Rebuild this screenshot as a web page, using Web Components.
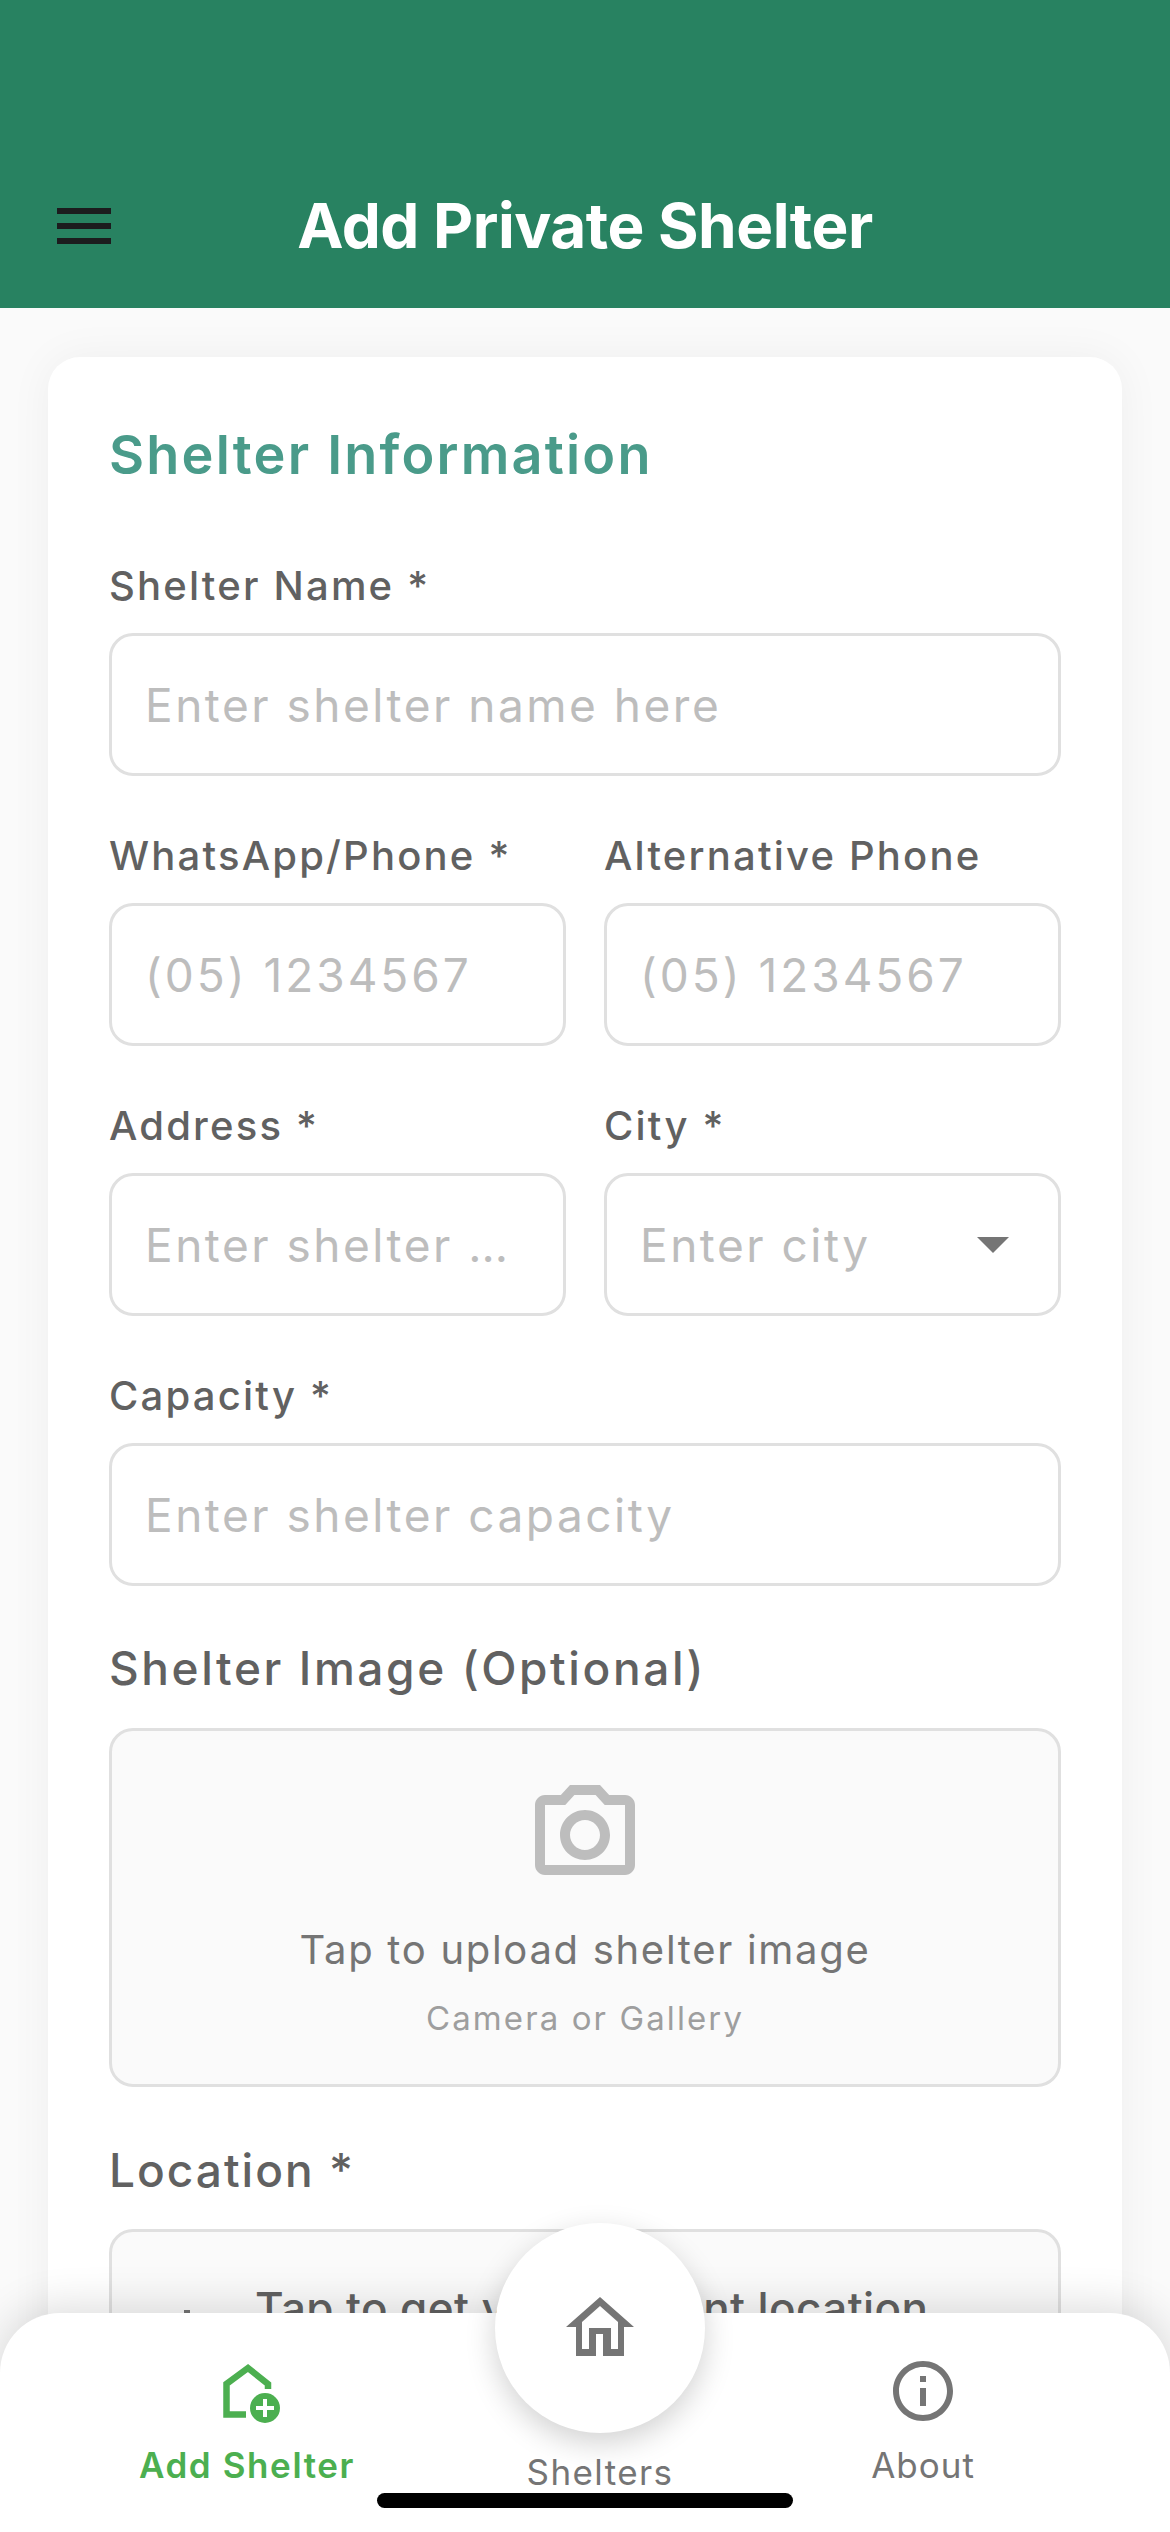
<!DOCTYPE html>
<html lang="en">
<head>
<meta charset="utf-8">
<title>Add Private Shelter</title>
<style>
    html, body { margin: 0; background: #fafafa; }
    body { font-family: Inter, "Liberation Sans", sans-serif; }
</style>
</head>
<body>
<shelter-app>
    <app-header slot="header" title="Add Private Shelter"></app-header>
    <form-card heading="Shelter Information">
        <text-field label="Shelter Name *" placeholder="Enter shelter name here"></text-field>
        <field-row>
            <text-field label="WhatsApp/Phone *" placeholder="(05) 1234567" numeric></text-field>
            <text-field label="Alternative Phone" placeholder="(05) 1234567" numeric></text-field>
        </field-row>
        <field-row>
            <text-field label="Address *" placeholder="Enter shelter …"></text-field>
            <text-field label="City *" placeholder="Enter city" dropdown></text-field>
        </field-row>
        <text-field label="Capacity *" placeholder="Enter shelter capacity"></text-field>
        <upload-box label="Shelter Image (Optional)" text="Tap to upload shelter image" hint="Camera or Gallery"></upload-box>
        <location-box label="Location *" text="Tap to get your current location"></location-box>
    </form-card>
    <bottom-nav slot="nav"></bottom-nav>
</shelter-app>

<script>
function makeTemplate(html) {
    const t = document.createElement('template');
    t.innerHTML = html;
    return t;
}

class Base extends HTMLElement {
    constructor(template) {
        super();
        this.attachShadow({mode: 'open'});
        this.shadowRoot.appendChild(template.content.cloneNode(true));
    }
    text(id, value) {
        this.shadowRoot.getElementById(id).textContent = value;
    }
}

const appTemplate = makeTemplate(`
    <style>
        :host {
            display: flex;
            flex-direction: column;
            position: relative;
            width: 1170px;
            height: 2532px;
            overflow: hidden;
            background: #fafafa;
        }
        main { padding: 49px 48px 0; }
    </style>
    <slot name="header"></slot>
    <main><slot></slot></main>
    <slot name="nav"></slot>
`);
customElements.define('shelter-app', class extends Base {
    constructor() { super(appTemplate); }
});

const headerTemplate = makeTemplate(`
    <style>
        :host {
            display: grid;
            grid-template-columns: 1fr auto 1fr;
            align-items: center;
            height: 100px;
            padding: 176px 0 32px;
            background: #288261;
            position: relative;
            z-index: 1;
        }
        svg { display: block; margin-left: 57px; }
        h1 {
            margin: 0;
            font: 700 62px/100px Inter, "Liberation Sans", sans-serif;
            letter-spacing: -0.5px;
            color: #fff;
        }
    </style>
    <svg width="54" height="36" viewBox="0 0 54 36" fill="#1c1c1e">
        <rect width="54" height="6"/><rect y="15" width="54" height="6"/><rect y="30" width="54" height="6"/>
    </svg>
    <h1 id="title"></h1>
`);
customElements.define('app-header', class extends Base {
    constructor() { super(headerTemplate); }
    connectedCallback() { this.text('title', this.getAttribute('title')); }
});

const cardTemplate = makeTemplate(`
    <style>
        :host {
            display: block;
            padding: 65px 61px 0;
            background: #fff;
            border-radius: 32px;
            box-shadow: 0 0 44px rgba(0, 0, 0, .05);
        }
        h2 {
            margin: 0 0 71px;
            font: 600 54px/66px Inter, "Liberation Sans", sans-serif;
            letter-spacing: 2.2px;
            color: #4a9b8a;
        }
        .stack { display: flex; flex-direction: column; gap: 53px; }
    </style>
    <h2 id="heading"></h2>
    <div class="stack"><slot></slot></div>
`);
customElements.define('form-card', class extends Base {
    constructor() { super(cardTemplate); }
    connectedCallback() { this.text('heading', this.getAttribute('heading')); }
});

const rowTemplate = makeTemplate(`
    <style>
        :host { display: grid; grid-template-columns: 1fr 1fr; gap: 38px; }
    </style>
    <slot></slot>
`);
customElements.define('field-row', class extends Base {
    constructor() { super(rowTemplate); }
});

const fieldTemplate = makeTemplate(`
    <style>
        :host { display: block; min-width: 0; }
        label {
            display: block;
            padding-top: 2px;
            margin-bottom: 22px;
            font: 500 40px/50px Inter, "Liberation Sans", sans-serif;
            letter-spacing: 2.2px;
            color: #616161;
        }
        .box {
            display: flex;
            align-items: center;
            box-sizing: border-box;
            height: 143px;
            padding: 0 33px;
            border: 3px solid #e0e0e0;
            border-radius: 24px;
            background: #fff;
        }
        .ph {
            flex: 1;
            min-width: 0;
            white-space: nowrap;
            font: 400 46px/56px Inter, "Liberation Sans", sans-serif;
            letter-spacing: 2.5px;
            color: #bdbdbd;
        }
        :host([numeric]) .ph { letter-spacing: 3px; }
        .caret {
            display: none;
            width: 0;
            height: 0;
            margin-right: 16px;
            border-left: 16px solid transparent;
            border-right: 16px solid transparent;
            border-top: 16px solid #757575;
        }
        :host([dropdown]) .caret { display: block; }
    </style>
    <label id="label"></label>
    <div class="box"><span class="ph" id="ph"></span><span class="caret"></span></div>
`);
customElements.define('text-field', class extends Base {
    constructor() { super(fieldTemplate); }
    connectedCallback() {
        this.text('label', this.getAttribute('label'));
        this.text('ph', this.getAttribute('placeholder'));
    }
});

const uploadTemplate = makeTemplate(`
    <style>
        :host { display: block; margin-top: -1px; }
        .label {
            margin-bottom: 30px;
            font: 500 46px/60px Inter, "Liberation Sans", sans-serif;
            letter-spacing: 2.6px;
            color: #616161;
        }
        .box {
            display: flex;
            flex-direction: column;
            align-items: center;
            box-sizing: border-box;
            height: 359px;
            padding-top: 44px;
            border: 3px solid #e0e0e0;
            border-radius: 24px;
            background: #fafafa;
        }
        svg { display: block; }
        .text {
            margin-top: 30px;
            font: 400 40px/50px Inter, "Liberation Sans", sans-serif;
            letter-spacing: 1.7px;
            color: #757575;
        }
        .hint {
            margin-top: 23px;
            font: 400 33px/40px Inter, "Liberation Sans", sans-serif;
            letter-spacing: 2.1px;
            color: #9e9e9e;
        }
    </style>
    <div class="label" id="label"></div>
    <div class="box">
        <svg width="120" height="120" viewBox="0 0 24 24" fill="#bdbdbd">
            <path d="M14.12 4l1.83 2H20v12H4V6h4.05l1.83-2h4.24M15 2H9L7.17 4H4c-1.1 0-2 .9-2 2v12c0 1.1.9 2 2 2h16c1.1 0 2-.9 2-2V6c0-1.1-.9-2-2-2h-3.17L15 2zm-3 7c1.65 0 3 1.35 3 3s-1.35 3-3 3-3-1.35-3-3 1.35-3 3-3m0-2c-2.76 0-5 2.24-5 5s2.24 5 5 5 5-2.24 5-5-2.24-5-5-5z"/>
        </svg>
        <div class="text" id="text"></div>
        <div class="hint" id="hint"></div>
    </div>
`);
customElements.define('upload-box', class extends Base {
    constructor() { super(uploadTemplate); }
    connectedCallback() {
        this.text('label', this.getAttribute('label'));
        this.text('text', this.getAttribute('text'));
        this.text('hint', this.getAttribute('hint'));
    }
});

const locationTemplate = makeTemplate(`
    <style>
        :host { display: block; }
        .label {
            margin-bottom: 29px;
            font: 500 46px/60px Inter, "Liberation Sans", sans-serif;
            letter-spacing: 2px;
            color: #616161;
        }
        .box {
            display: flex;
            align-items: flex-start;
            gap: 32px;
            box-sizing: border-box;
            height: 300px;
            padding: 51px 39px 0;
            border: 3px solid #e0e0e0;
            border-radius: 24px;
            background: #fafafa;
        }
        svg { display: block; flex: none; margin-top: 24px; }
        .text {
            font: 500 44px/50px Inter, "Liberation Sans", sans-serif;
            letter-spacing: .4px;
            color: #616161;
        }
    </style>
    <div class="label" id="label"></div>
    <div class="box">
        <svg width="72" height="72" viewBox="0 0 24 24" fill="#757575">
            <path d="M12 8c-2.21 0-4 1.79-4 4s1.79 4 4 4 4-1.79 4-4-1.79-4-4-4zm8.94 3c-.46-4.17-3.77-7.48-7.94-7.94V1h-2v2.06C6.83 3.52 3.52 6.83 3.06 11H1v2h2.06c.46 4.17 3.77 7.48 7.94 7.94V23h2v-2.06c4.17-.46 7.48-3.77 7.94-7.94H23v-2h-2.06zM12 19c-3.87 0-7-3.13-7-7s3.13-7 7-7 7 3.13 7 7-3.13 7-7 7z"/>
        </svg>
        <div class="text" id="text"></div>
    </div>
`);
customElements.define('location-box', class extends Base {
    constructor() { super(locationTemplate); }
    connectedCallback() {
        this.text('label', this.getAttribute('label'));
        this.text('text', this.getAttribute('text'));
    }
});

const tabTemplate = makeTemplate(`
    <style>
        :host {
            display: flex;
            flex-direction: column;
            align-items: center;
            padding-top: 42px;
            color: #757575;
        }
        :host([active]) { color: #4caf50; }
        :host([raised]) { padding-top: 136px; }
        ::slotted(svg) { display: block; }
        .label {
            margin-top: 15px;
            font: 400 35px/46px Inter, "Liberation Sans", sans-serif;
            letter-spacing: 1px;
        }
        :host([active]) .label { font-weight: 600; letter-spacing: 1.6px; }
        :host([raised]) .label { margin-top: 0; letter-spacing: 1.4px; }
        .bubble {
            position: absolute;
            top: -90px;
            box-sizing: border-box;
            width: 210px;
            height: 210px;
            padding-bottom: 4px;
            display: none;
            align-items: center;
            justify-content: center;
            border-radius: 50%;
            background: #fff;
            box-shadow: 0 10px 30px rgba(0, 0, 0, .18);
        }
        :host([raised]) .bubble { display: flex; }
    </style>
    <div class="bubble"><slot name="bubble"></slot></div>
    <slot></slot>
    <div class="label" id="label"></div>
`);
customElements.define('nav-tab', class extends Base {
    constructor() { super(tabTemplate); }
    connectedCallback() { this.text('label', this.getAttribute('label')); }
});

const navTemplate = makeTemplate(`
    <style>
        :host {
            position: absolute;
            left: 0;
            right: 0;
            bottom: 0;
            height: 219px;
            display: grid;
            grid-template-columns: 354px 352px 294px;
            padding-left: 70px;
            background: #fff;
            border-radius: 60px 60px 0 0;
            box-shadow: 0 -6px 44px rgba(0, 0, 0, .14);
        }
        .indicator {
            position: absolute;
            left: 377px;
            bottom: 24px;
            width: 416px;
            height: 15px;
            border-radius: 8px;
            background: #000;
        }
        svg { display: block; }
    </style>
    <nav-tab label="Add Shelter" active>
        <svg width="72" height="72" viewBox="0 0 72 72">
            <polyline points="35,59.5 15.5,59.5 15.5,29 37,13 57,29 57,34" fill="none" stroke="#4caf50" stroke-width="6.5"/>
            <circle cx="54" cy="53" r="15" fill="#4caf50"/>
            <path d="M45 53h18M54 44v18" stroke="#fff" stroke-width="4" fill="none"/>
        </svg>
    </nav-tab>
    <nav-tab label="Shelters" raised>
        <svg slot="bubble" width="80" height="72" viewBox="0 0 80 72" fill="#757575">
            <path fill-rule="evenodd" d="M6 37 40 7 74 37H64V66H43V44H36V66H16V37ZM22 32 40 16 58 32V59H51V38H29V59H22Z"/>
        </svg>
    </nav-tab>
    <nav-tab label="About">
        <svg width="72" height="72" viewBox="0 0 24 24" fill="#757575">
            <path d="M11 7h2v2h-2zm0 4h2v6h-2zm1-9C6.48 2 2 6.48 2 12s4.48 10 10 10 10-4.48 10-10S17.52 2 12 2zm0 18c-4.41 0-8-3.59-8-8s3.59-8 8-8 8 3.59 8 8-3.59 8-8 8z"/>
        </svg>
    </nav-tab>
    <div class="indicator"></div>
`);
customElements.define('bottom-nav', class extends Base {
    constructor() { super(navTemplate); }
});
</script>
</body>
</html>
